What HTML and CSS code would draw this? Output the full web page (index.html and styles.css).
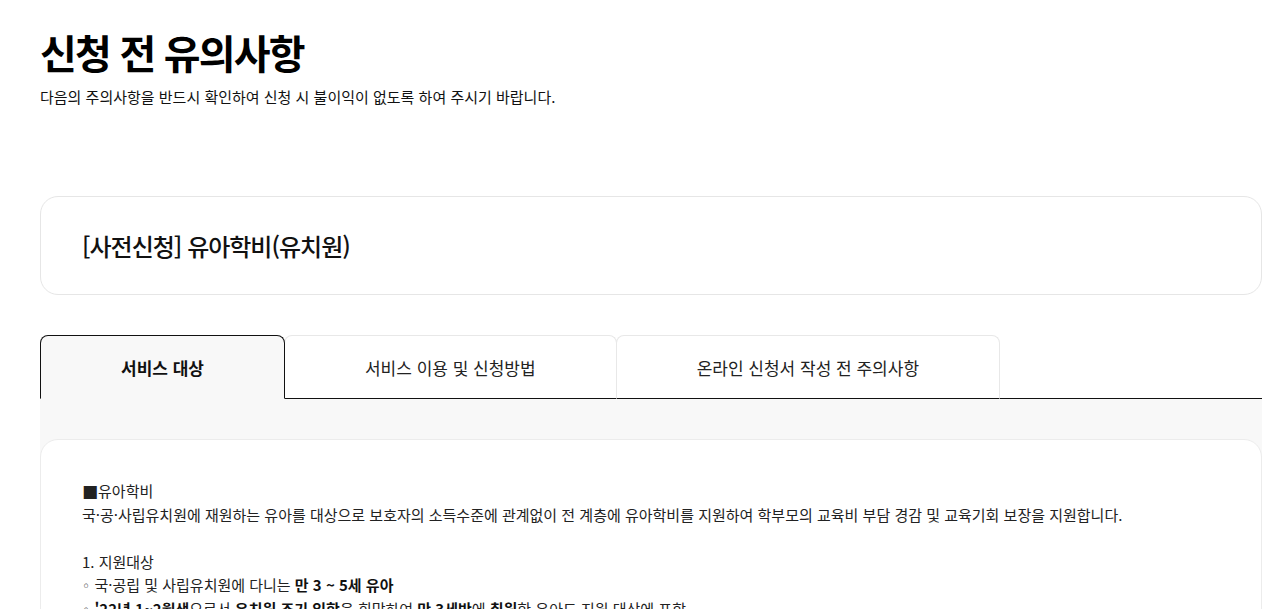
FILE: index.html
```html
<!DOCTYPE html>
<html lang="ko">
<head>
<meta charset="utf-8">
<title>신청 전 유의사항</title>
<link rel="stylesheet" href="styles.css">
</head>
<body>
<main class="page">
  <header class="page-head">
    <h1 class="page-title">신청 전 유의사항</h1>
    <p class="page-desc">다음의 주의사항을 반드시 확인하여 신청 시 불이익이 없도록 하여 주시기 바랍니다.</p>
  </header>

  <section class="service-card">
    <h2 class="service-name">[사전신청] 유아학비(유치원)</h2>
  </section>

  <nav class="tabs">
    <button class="tab is-active">서비스 대상</button>
    <button class="tab">서비스 이용 및 신청방법</button>
    <button class="tab">온라인 신청서 작성 전 주의사항</button>
    <span class="tab-fill"></span>
  </nav>

  <section class="tab-panel">
    <div class="panel-card">
      <p><span class="square">■</span>유아학비</p>
      <p>국·공·사립유치원에 재원하는 유아를 대상으로 보호자의 소득수준에 관계없이 전 계층에 유아학비를 지원하여 학부모의 교육비 부담 경감 및 교육기회 보장을 지원합니다.</p>
      <p class="gap">1. 지원대상</p>
      <p><span class="bullet">◦</span> 국·공립 및 사립유치원에 다니는 <b>만 3 ~ 5세 유아</b></p>
      <p><span class="bullet">◦</span> <b>'22년 1~2월생</b>으로서 <b>유치원 조기 입학</b>을 희망하여 <b>만 3세반</b>에 <b>취원</b>한 유아도 지원 대상에 포함</p>
      <p><span class="bullet">◦</span> 초등학교 취학을 유예한 유아도 지원 대상에 포함</p>
    </div>
  </section>
</main>
</body>
</html>
```

FILE: styles.css
```css
* { box-sizing: border-box; }

html, body {
  margin: 0;
  padding: 0;
  background: #fff;
}

body {
  font-family: "Noto Sans CJK KR", "Noto Sans", sans-serif;
  color: #111;
}

.page {
  width: 1222px;
  margin-left: 40px;
  padding-top: 24px;
}

.page-title {
  margin: 0;
  font-size: 40px;
  font-weight: 700;
  line-height: 56px;
  letter-spacing: -1.8px;
  color: #000;
}

.page-desc {
  margin: 6px 0 0;
  font-size: 15px;
  line-height: 22px;
  color: #111;
}

.service-card {
  margin-top: 88px;
  height: 99px;
  border: 1px solid #e6e6e6;
  border-radius: 18px;
  padding: 0 41px;
  display: flex;
  align-items: center;
}

.service-name {
  margin: 0;
  font-size: 24px;
  font-weight: 500;
  letter-spacing: -1px;
  color: #111;
}

.tabs {
  margin-top: 40px;
  display: flex;
  align-items: flex-end;
}

.tab {
  height: 64px;
  padding: 0 80px;
  font-family: inherit;
  font-size: 17px;
  font-weight: 400;
  color: #222;
  background: #fff;
  border: 1px solid #e8e8e8;
  border-bottom: 1px solid #111;
  border-radius: 8px 8px 0 0;
  cursor: pointer;
}

.tab + .tab { margin-left: -1px; }

.tab.is-active {
  font-weight: 700;
  color: #111;
  background: #f8f8f8;
  border-color: #111;
  border-bottom-color: #f8f8f8;
  position: relative;
  z-index: 1;
}

.tab-fill {
  flex: 1;
  border-bottom: 1px solid #111;
}

.tab-panel {
  background: #f8f8f8;
  padding-top: 40px;
}

.panel-card {
  background: #fff;
  border: 1px solid #ececec;
  border-radius: 18px;
  padding: 39px 41px 40px;
  font-size: 15px;
  line-height: 23.5px;
  color: #222;
}

.panel-card p { margin: 0; }

.panel-card .gap { margin-top: 23.5px; }

.panel-card b { font-weight: 700; color: #111; }

.bullet {
  font-family: "DejaVu Sans", sans-serif;
  font-size: 14px;
  line-height: 1;
}

.square {
  font-family: "DejaVu Sans", sans-serif;
  font-size: 17px;
  line-height: 1;
  color: #222;
}
```
